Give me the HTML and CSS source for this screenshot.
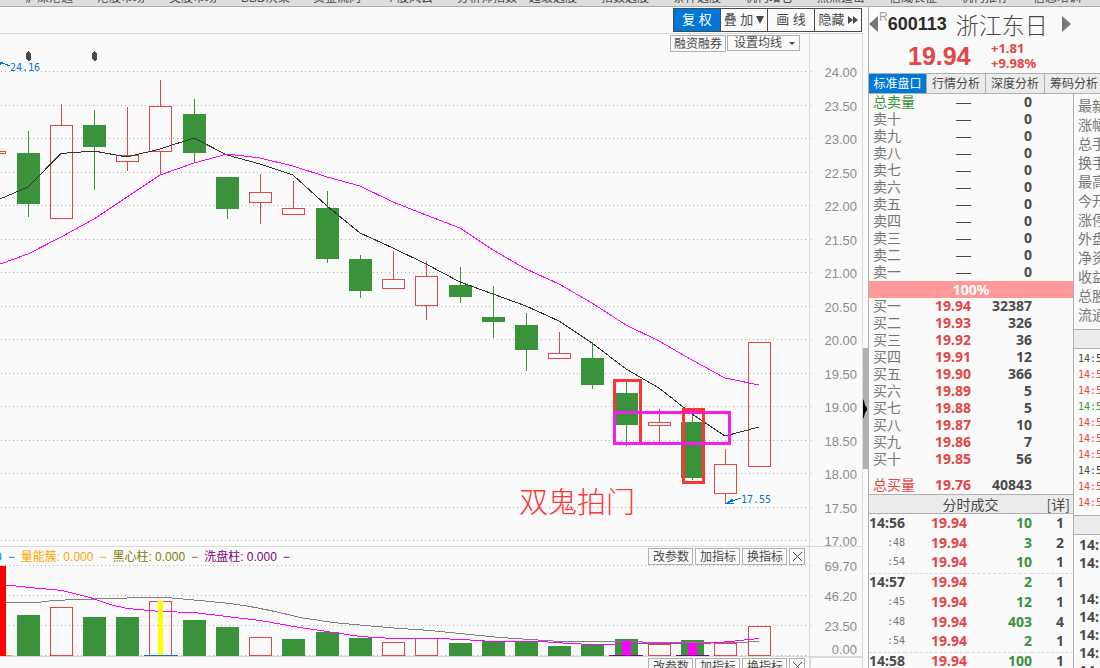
FILE: index.html
```html
<!DOCTYPE html>
<html lang="zh-CN">
<head>
<meta charset="utf-8">
<title>浙江东日 600113</title>
<link rel="stylesheet" href="styles.css">
</head>
<body>
<nav class="topnav">
  <a href="#">沪深港通</a><a href="#">港股市场</a><a href="#">美股市场</a><a href="#">BBD决策</a><a href="#">资金流向</a><a href="#">个股风云</a><a href="#">分析师指数</a><a href="#">超级选股</a><a href="#">指数选股</a><a href="#">条件选股</a><a href="#">机构增仓</a><a href="#">热点追击</a><a href="#">信威长征</a><a href="#">机构推荐</a><a href="#">信息培训</a>
</nav>
<main class="layout">
  <section class="charts">
    <div class="toolbar">
      <button class="tool active">复 权</button>
      <button class="tool">叠 加<svg width="8" height="8" viewBox="0 0 8 8"><path d="M0 0h8L4 8z"/></svg></button>
      <button class="tool">画 线</button>
      <button class="tool">隐藏<svg class="more" width="10" height="8" viewBox="0 0 10 8"><path d="M0 0l5 4-5 4zM5 0l5 4-5 4z"/></svg></button>
    </div>
    <div class="pane">
      <div class="overlay">
        <button class="chip">融资融券</button>
        <button class="chip average">设置均线<svg width="6" height="3" viewBox="0 0 6 3"><path d="M0 0h6L3 3z"/></svg></button>
      </div>
      <svg class="plot" viewBox="0 34 863 512">
        <path class="grid" d="M1 71.5H809M1 105.5H809M1 138.5H809M1 172.5H809M1 205.5H809M1 239.5H809M1 272.5H809M1 306.5H809M1 339.5H809M1 373.5H809M1 406.5H809M1 440.5H809M1 473.5H809M1 507.5H809M1 540.5H809"/>
        <path class="axis" d="M809.5 34V546M810 71.5h2M810 105.5h2M810 138.5h2M810 172.5h2M810 205.5h2M810 239.5h2M810 272.5h2M810 306.5h2M810 339.5h2M810 373.5h2M810 406.5h2M810 440.5h2M810 473.5h2M810 507.5h2M810 540.5h2"/>
        <g class="tick">
          <text x="857" y="77">24.00</text><text x="857" y="111">23.50</text><text x="857" y="144">23.00</text><text x="857" y="178">22.50</text><text x="857" y="211">22.00</text><text x="857" y="245">21.50</text><text x="857" y="278">21.00</text><text x="857" y="312">20.50</text><text x="857" y="345">20.00</text><text x="857" y="379">19.50</text><text x="857" y="412">19.00</text><text x="857" y="446">18.50</text><text x="857" y="479">18.00</text><text x="857" y="513">17.50</text><text x="857" y="546">17.00</text>
        </g>
        <path class="down" d="M28 131h1v86h-1zM17 153h23v51h-23zM94 110h1v80h-1zM83 125h23v22h-23zM194 99h1v64h-1zM183 114h23v39h-23zM227 177h1v42h-1zM216 177h23v32h-23zM327 191h1v72h-1zM316 208h23v51h-23zM360 255h1v43h-1zM349 259h23v32h-23zM460 267h1v36h-1zM449 285h23v12h-23zM493 286h1v52h-1zM482 317h23v5h-23zM526 313h1v58h-1zM515 325h23v25h-23zM592 342h1v47h-1zM581 358h23v27h-23zM626 382h1v64h-1zM615 393h23v32h-23zM692 412h1v68h-1zM681 422h23v56h-23z"/>
        <path class="up" d="M0 151.5h5.500v2H0M61.500 104v21M50.500 125.500h22v93h-22zM127.500 107v48M127.500 162v9M116.500 155.500h22v6h-22zM160.500 80v26M160.500 152v22M149.500 106.500h22v45h-22zM260.500 174v18M260.500 203v21M249.500 192.500h22v10h-22zM293.500 181v27M282.500 208.500h22v6h-22zM393.500 251v28M382.500 279.500h22v9h-22zM426.500 261v15M426.500 306v14M415.500 276.500h22v29h-22zM559.500 332v21M548.500 353.500h22v5h-22zM659.500 409v13M659.500 426v17M648.500 422.500h22v3h-22zM725.500 449v15M725.500 494v9M714.500 464.500h22v29h-22zM748.500 342.500h22v124h-22z"/>
        <path class="ma-short" d="M0 199L28 187 61 153.500 94 151 127 157 160 149 194 138 227 155 260 164 293 175 327 206 360 233 393 248 426 264 460 282 493 294 526 306 559 321 592 343 626 369 659 388 692 414 725 436 759 427"/>
        <path class="ma-long" d="M0 264L28 254 61 237 94 219 127 197 160 175 194 163 227 154 260 158 293 166 327 177 360 186 393 202 426 215 460 228 493 250 526 269 559 284 592 303 626 325 659 341 692 360 725 378 759 385"/>
        <g class="mark-red"><rect x="614.500" y="380.500" width="26" height="63"/></g>
        <rect class="mark-pink" x="614.500" y="412.500" width="115" height="31"/>
        <g class="mark-red"><rect x="683.500" y="409.500" width="20" height="73"/></g>
        <path class="mark-pink" d="M682 443.500h24"/>
        <path class="bullet" d="M28 51h1l2 3v5l-2 2h-1l-2-2v-5zM94 51h1l2 3v5l-2 2h-1l-2-2v-5z"/>
        <path class="pointer" d="M0 62l10 4M0 65l2-3M741 498l-14 5M733 499l-6 4 7 0"/>
        <text class="extreme" x="10" y="71">24.16</text>
        <text class="extreme" x="741" y="503">17.55</text>
        <text class="note" x="519" y="513">双鬼拍门</text>
      </svg>
    </div>
    <div class="pane">
      <div class="legend">
        <span class="blue">0</span><span class="blue">−</span><span class="orange">量能簇: 0.000</span><span class="orange">−</span><span class="olive">黑心柱: 0.000</span><span class="olive">−</span><span class="purple">洗盘柱: 0.000</span><span class="purple">−</span>
      </div>
      <div class="overlay indicator">
        <button class="chip">改参数</button><button class="chip">加指标</button><button class="chip">换指标</button><button class="chip close" aria-label="关闭"><svg width="9" height="9" viewBox="0 0 9 9"><path d="M0 0l9 9M9 0L0 9"/></svg></button>
      </div>
      <svg class="plot" viewBox="0 547 863 109">
        <path class="grid" d="M1 565.500H809M1 595.500H809M1 625.500H809M1 655.500H809"/>
        <path class="axis" d="M809.500 547V656M810 565.500h2M810 595.500h2M810 625.500h2"/>
        <g class="tick"><text x="857" y="571">69.70</text><text x="857" y="601">46.20</text><text x="857" y="631">23.50</text><text x="857" y="654">0.00</text></g>
        <path class="down" d="M17 615h23v41h-23zM83 617h23v39h-23zM116 617h23v39h-23zM183 620h23v36h-23zM216 627h23v29h-23zM282 639h23v17h-23zM316 632h23v24h-23zM349 638h23v18h-23zM449 643h23v13h-23zM482 641h23v15h-23zM515 641h23v15h-23zM548 646h23v10h-23zM581 645h23v11h-23zM615 639h23v17h-23zM681 640h23v16h-23z"/>
        <path class="up" d="M50.500 607.500h22v48h-22zM149.500 601.500h22v54h-22zM249.500 637.500h22v18h-22zM382.500 642.500h22v13h-22zM415.500 638.500h22v17h-22zM648.500 644.500h22v11h-22zM714.500 643.500h22v12h-22zM748.500 626.500h22v29h-22z"/>
        <path class="v-gray" d="M6 602.500H37L53 600.500 78 599.500 111 598.500 144 597.500H166L178 598.500 210 601.500 230 603.500 250 606.500 275 611.500 300 617.500 333 622.500 365 625.500 400 628.500 430 630.500 470 634.500 500 637.500 530 639.500 560 641.500H640L645 642.500H740L759 641.500"/>
        <path class="v-pink" d="M6 585L30 587.500 62 590.500 90 597.500 110 604.500 127 608.500 160 611.500 194 612.500 227 616.500 260 620.500 300 627.500 327 631.500 360 636.500 393 638.500H440L480 640.500 490 641.500H540L570 643.500 592 644.500 640 643.500H705L730 641.500 759 638.500"/>
        <path class="v-surge" d="M0 566h6v90H0z"/>
        <path class="v-yellow" d="M158 601h5v54h-5z"/>
        <path class="v-magenta" d="M622 641h9v14h-9zM688 643h9v12h-9z"/>
        <path class="base-blue" d="M144 655h34v1h-34z"/>
        <path class="base-orange" d="M6 655h6v1H6z"/>
        <path class="base-purple" d="M609 655h34v1h-34zM676 655h33v1h-33z"/>
      </svg>
    </div>
    <div class="pane next">
      <div class="overlay indicator">
        <button class="chip">改参数</button><button class="chip">加指标</button><button class="chip">换指标</button><button class="chip close" aria-label="关闭"><svg width="9" height="9" viewBox="0 0 9 9"><path d="M0 0l9 9M9 0L0 9"/></svg></button>
      </div>
      <div class="axis-box"></div>
    </div>
  </section>
  <div class="splitter"><div class="before"></div><div class="thumb"><svg width="4" height="20" viewBox="0 0 4 20"><path d="M0 0l1 2 1 4 2 3v2l-2 3-1 4-1 2z"/></svg></div><div class="after"></div></div>
  <aside class="quote">
    <header class="stock">
      <div class="title">
        <button class="step" aria-label="上一只"><svg width="9" height="16" viewBox="0 0 9 16"><path d="M9 0v16L0 8z"/></svg></button>
        <sup>R</sup><strong>600113</strong><span class="name">浙江东日</span>
        <button class="step next-stock" aria-label="下一只"><svg width="9" height="16" viewBox="0 0 9 16"><path d="M0 0v16l9-8z"/></svg></button>
      </div>
      <div class="price"><strong>19.94</strong><div class="change"><span>+1.81</span><span>+9.98%</span></div></div>
    </header>
    <div class="tabs">
      <button class="tab selected">标准盘口</button><button class="tab">行情分析</button><button class="tab">深度分析</button><button class="tab">筹码分析</button>
    </div>
    <div class="body">
      <div class="book">
        <table class="levels">
          <tr class="total-sell"><th>总卖量</th><td>—</td><td>0</td></tr>
          <tr><th>卖十</th><td>—</td><td>0</td></tr>
          <tr><th>卖九</th><td>—</td><td>0</td></tr>
          <tr><th>卖八</th><td>—</td><td>0</td></tr>
          <tr><th>卖七</th><td>—</td><td>0</td></tr>
          <tr><th>卖六</th><td>—</td><td>0</td></tr>
          <tr><th>卖五</th><td>—</td><td>0</td></tr>
          <tr><th>卖四</th><td>—</td><td>0</td></tr>
          <tr><th>卖三</th><td>—</td><td>0</td></tr>
          <tr><th>卖二</th><td>—</td><td>0</td></tr>
          <tr><th>卖一</th><td>—</td><td>0</td></tr>
        </table>
        <div class="ratio">100%</div>
        <table class="levels buy">
          <tr><th>买一</th><td>19.94</td><td>32387</td></tr>
          <tr><th>买二</th><td>19.93</td><td>326</td></tr>
          <tr><th>买三</th><td>19.92</td><td>36</td></tr>
          <tr><th>买四</th><td>19.91</td><td>12</td></tr>
          <tr><th>买五</th><td>19.90</td><td>366</td></tr>
          <tr><th>买六</th><td>19.89</td><td>5</td></tr>
          <tr><th>买七</th><td>19.88</td><td>5</td></tr>
          <tr><th>买八</th><td>19.87</td><td>10</td></tr>
          <tr><th>买九</th><td>19.86</td><td>7</td></tr>
          <tr><th>买十</th><td>19.85</td><td>56</td></tr>
        </table>
        <table class="levels buy sum">
          <tr><th>总买量</th><td>19.76</td><td>40843</td></tr>
        </table>
        <div class="band"><span>分时成交</span><a href="#">[详]</a></div>
        <table class="trades">
          <tr><th>14:56</th><td>19.94</td><td>10</td><td>1</td></tr>
          <tr class="sec"><th>:48</th><td>19.94</td><td>3</td><td>2</td></tr>
          <tr class="sec last"><th>:54</th><td>19.94</td><td>10</td><td>1</td></tr>
          <tr><th>14:57</th><td>19.94</td><td>2</td><td>1</td></tr>
          <tr class="sec"><th>:45</th><td>19.94</td><td>12</td><td>1</td></tr>
          <tr class="sec"><th>:48</th><td>19.94</td><td>403</td><td>4</td></tr>
          <tr class="sec last"><th>:54</th><td>19.94</td><td>2</td><td>1</td></tr>
          <tr><th>14:58</th><td>19.94</td><td>100</td><td>1</td></tr>
        </table>
      </div>
      <div class="side">
        <ul class="facts"><li>最新</li><li>涨幅</li><li>总手</li><li>换手</li><li>最高</li><li>今开</li><li>涨停</li><li>外盘</li><li>净资</li><li>收益</li><li>总股</li><li>流通</li></ul>
        <div class="side-band"></div>
        <ul class="times"><li>14:5</li><li class="r">14:5</li><li class="r">14:5</li><li class="g">14:5</li><li class="r">14:5</li><li class="r">14:5</li><li class="r">14:5</li><li>14:5</li><li class="r">14:5</li><li class="r">14:5</li></ul>
        <div class="side-band"></div>
        <ul class="minutes"><li>14:</li><li>14:</li><li></li><li>14:</li><li>14:</li><li>14:</li><li>14:</li><li>14:</li></ul>
      </div>
    </div>
  </aside>
</main>
</body>
</html>
```
FILE: styles.css
```css
* { box-sizing: border-box; }

body {
  margin: 0;
  height: 100vh;
  overflow: hidden;
  display: flex;
  flex-direction: column;
  background: #fafafa;
  color: #4a4a4a;
  font: 12px/14px "Liberation Sans", "Noto Sans CJK SC", sans-serif;
}

button {
  margin: 0;
  padding: 0;
  border: 0;
  background: none;
  color: inherit;
  font: inherit;
  white-space: nowrap;
}

button svg { fill: #4a4a4a; }
ul { margin: 0; padding: 0; list-style: none; }
table { width: 100%; border-collapse: collapse; table-layout: fixed; }
th, td { padding: 0; white-space: nowrap; }

/* top navigation */
.topnav {
  flex: none;
  display: flex;
  align-items: flex-end;
  height: 7px;
  padding: 0 0 1px 25px;
  overflow: hidden;
  background: #dedede;
  border-bottom: 1px solid #b0b0b0;
}

.topnav a {
  flex: 0 0 72px;
  color: #4a4a4a;
  text-decoration: none;
  white-space: nowrap;
}

.layout {
  flex: 1;
  min-height: 0;
  display: grid;
  grid-template-columns: minmax(0, 1fr) 5px 232px;
  grid-template-rows: minmax(0, 1fr);
}

/* charts */
.charts { overflow: hidden; }

.toolbar {
  display: flex;
  justify-content: flex-end;
  height: 26px;
  padding: 1px 1px 1px 0;
}

.tool {
  display: flex;
  align-items: center;
  justify-content: center;
  gap: 3px;
  width: 48px;
  margin-left: -1px;
  border: 1px solid #4a4a4a;
  font-size: 13px;
}

.tool.active { background: #0078d7; color: #fff; }

.pane {
  position: relative;
  border-top: 1px solid #dadada;
  border-right: 1px solid #dadada;
}

.plot { display: block; width: calc(100% + 1px); height: auto; }
.plot path, .plot rect { fill: none; shape-rendering: crispEdges; }
.plot .grid { stroke: #b0b0b0; stroke-dasharray: 1 3; }
.plot .axis { stroke: #dadada; }
.tick { fill: #8c8c8c; font-size: 13px; text-anchor: end; }
.plot .down { fill: #3a923a; }
.plot .up { stroke: #e64545; }
.plot .ma-short { stroke: #333; }
.plot .ma-long { stroke: #f0f; }
.mark-red { stroke: #ff3535; stroke-width: 3px; }
.plot .mark-pink { stroke: #f81cf0; stroke-width: 3px; }
.plot .bullet { fill: #4a4a4a; }
.plot .pointer { stroke: #0078d7; }
.extreme { fill: #0078d7; font: 10px "DejaVu Sans Mono", monospace; }
.note { fill: #ff3535; font: 300 29px "Noto Sans CJK SC", sans-serif; }
.plot .v-gray { stroke: #808080; }
.plot .v-pink { stroke: #f0f; }
.plot .v-surge { fill: #f00; }
.plot .v-yellow { fill: #ff0; }
.plot .v-magenta { fill: #f0f; }
.plot .base-blue { fill: #0078d7; }
.plot .base-orange { fill: #ffa500; }
.plot .base-purple { fill: #800080; }

.overlay {
  position: absolute;
  top: 1px;
  right: 62px;
  display: flex;
  align-items: flex-start;
  gap: 1px;
}

.overlay.indicator { right: 57px; gap: 2px; }

.chip {
  height: 17px;
  padding: 1px 4px 0;
  border: 1px solid #b0b0b0;
  background: #fafafa;
  line-height: 14px;
}

.overlay:not(.indicator) .chip { padding: 1px 3px 0; }

.overlay .chip.average {
  display: flex;
  align-items: center;
  gap: 7px;
  height: 16px;
  padding: 0 4px 0 6px;
}

.indicator .chip { width: 45px; }
.indicator .chip.close { width: 16px; padding: 0 3px; }
.close svg { display: block; margin: 0 auto; stroke: #4a4a4a; }

.legend {
  position: absolute;
  top: 3px;
  left: -5px;
  display: flex;
  gap: 6px;
}

.blue { color: #0078d7; }
.orange { color: #ffa500; }
.olive { color: #808000; }
.purple { color: #800080; }

.next { height: 40px; display: flex; justify-content: flex-end; }
.axis-box { width: 53px; border: solid #dadada; border-width: 1px 0 0 2px; }

/* splitter between charts and quote panel */
.splitter { display: flex; flex-direction: column; }
.before { flex: 341; }
.thumb { flex: 121; display: flex; align-items: center; background: #b0b0b0; }
.after { flex: 199; }

/* quote panel */
.quote {
  display: flex;
  flex-direction: column;
  min-height: 0;
  overflow: hidden;
  border-left: 1px solid #b0b0b0;
}

.stock { flex: none; height: 66px; }

.title { display: flex; align-items: center; height: 33px; }
.title sup { align-self: flex-start; padding: 3px 0 0 1px; color: #a0a0a0; font-size: 12px; }
.title strong { color: #2b2b2b; font-size: 18px; }
.title .name { margin: 0 14px 0 9px; font: 300 23px/24px "Noto Sans CJK SC", sans-serif; }
.step { height: 16px; }
.step svg { display: block; fill: #777; }

.price { display: flex; align-items: center; height: 32px; padding-left: 39px; color: #e64545; }
.price strong { width: 83px; font-size: 25px; line-height: 28px; }
.change { display: flex; flex-direction: column; font: bold 13px/15px "Noto Sans", sans-serif; }

.tabs {
  flex: none;
  display: flex;
  height: 21px;
  border: solid #b0b0b0;
  border-width: 1px 0;
  background: #ebebeb;
}

.tab { flex: 0 0 59px; padding-top: 1px; border-right: 1px solid #b0b0b0; }
.tab.selected { flex-basis: 58px; background: #0078d7; color: #fff; }

.body {
  flex: 1;
  min-height: 0;
  display: grid;
  grid-template-columns: 204px minmax(0, 1fr);
}

.book { overflow: hidden; }

.levels tr { height: 17px; }
.levels th, .levels td { padding-bottom: 2px; }
.levels th {
  width: 50px;
  padding-left: 4px;
  color: #777;
  font: 14px/15px "Noto Sans CJK SC", sans-serif;
  text-align: left;
}

.levels td {
  font: bold 14px/15px "Noto Sans", sans-serif;
  text-align: right;
}

.levels td:nth-child(2) { width: 52px; font: 15px/15px "Liberation Sans", sans-serif; }
.levels td:nth-child(3) { padding-right: 41px; }
.levels.buy td:nth-child(2) { color: #e64545; font: bold 14px/15px "Noto Sans", sans-serif; }
.levels .total-sell th { color: #3a923a; }
.levels.sum { margin: 9px 0 0; }
.levels.sum th { color: #e64545; }

.ratio {
  background: #ff9999;
  color: #fff;
  font: bold 14px/17px "Noto Sans", sans-serif;
  text-align: center;
}

.band {
  display: flex;
  justify-content: flex-end;
  gap: 48px;
  height: 20px;
  padding-right: 3px;
  border: solid #b0b0b0;
  border-width: 1px 0;
  background: #ebebeb;
  font: 14px/18px "Noto Sans CJK SC", sans-serif;
}

.band a { color: inherit; text-decoration: none; }

.trades tr { height: 20px; }
.trades tr.last { height: 19px; }
.trades th, .trades td { padding-bottom: 2px; font: bold 14px/16px "Noto Sans", sans-serif; text-align: right; }
.trades th { width: 36px; }
.trades td:nth-child(2) { width: 62px; color: #e64545; }
.trades td:nth-child(3) { width: 65px; color: #3a923a; }
.trades td:nth-child(4) { padding-right: 9px; }
.trades .sec th { color: #777; font: 10px/14px "DejaVu Sans Mono", monospace; }
.trades .last { border-bottom: 1px dashed #dadada; }

.side { overflow: hidden; border-left: 1px solid #b0b0b0; white-space: nowrap; }
.side li { padding-left: 4px; }
.facts { padding: 2px 0 5px; color: #777; font: 14px/19px "Noto Sans CJK SC", sans-serif; }
.side-band { height: 20px; border: solid #b0b0b0; border-width: 1px 0; background: #ebebeb; }
.times { padding: 2px 0 4px; font: 10px/16px "DejaVu Sans Mono", monospace; }
.times .r { color: #e64545; }
.times .g { color: #3a923a; }
.minutes { padding-top: 1px; font: bold 14px/18px "Noto Sans", sans-serif; }
.minutes li { height: 18px; padding-left: 5px; }
```
